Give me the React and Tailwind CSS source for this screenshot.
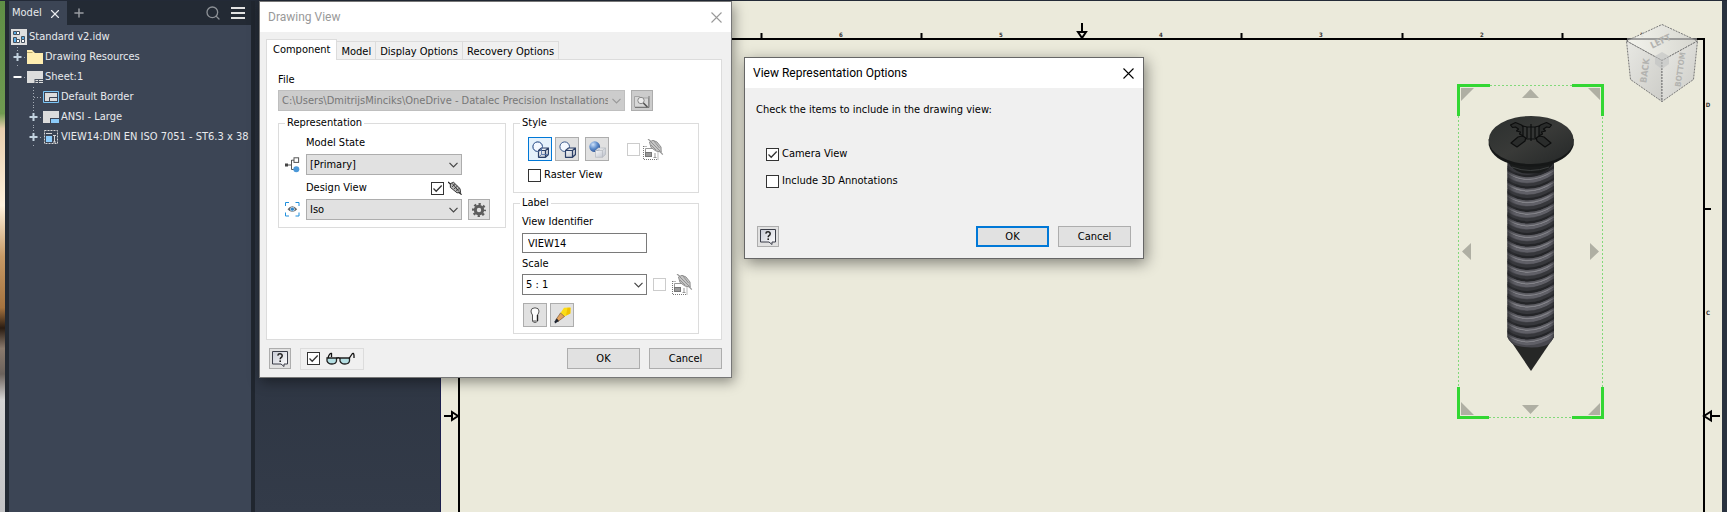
import { useState } from "react";
import { Plus, Search, X } from "lucide-react";

/* ---------- small controls ---------- */

const Check = ({ label, ariaLabel, defaultChecked = false, disabled = false }) => (
  <label className="flex items-center gap-[3px] leading-4">
    <span className="grid">
      <input
        type="checkbox"
        aria-label={ariaLabel}
        defaultChecked={defaultChecked}
        disabled={disabled}
        className="peer [grid-area:1/1] size-[13px] appearance-none border border-[#333] bg-white disabled:border-[#ccc]"
      />
      <svg
        viewBox="0 0 13 13"
        className="pointer-events-none [grid-area:1/1] size-[13px] opacity-0 peer-checked:opacity-100"
      >
        <path d="M2.5 6.5 5.2 9.2 10.7 3.5" fill="none" stroke="#333" strokeWidth="1.3" />
      </svg>
    </span>
    {label}
  </label>
);

const Chevron = ({ className }) => (
  <svg viewBox="0 0 9 6" className={className}>
    <path d="M.5 .8 4.5 4.8 8.5 .8" fill="none" stroke="currentColor" strokeWidth="1.2" />
  </svg>
);

const Select = ({ id, value, className, disabled = false, ariaLabel }) => (
  <span className="grid min-w-0 items-center">
    <select
      id={id}
      disabled={disabled}
      aria-label={ariaLabel}
      className={`[grid-area:1/1] h-[21px] w-full appearance-none border pt-px pr-4 pl-[3px] ${className}`}
    >
      <option>{value}</option>
    </select>
    <Chevron
      className={
        disabled
          ? "pointer-events-none [grid-area:1/1] mr-1 h-1.5 w-[9px] justify-self-end text-[#999]"
          : "pointer-events-none [grid-area:1/1] mr-1 h-1.5 w-[9px] justify-self-end text-[#444]"
      }
    />
  </span>
);

const ToolButton = ({ label, active = false, children }) => (
  <button
    type="button"
    aria-label={label}
    className={
      active
        ? "grid size-6 place-items-center border border-[#0078d7] bg-[#e5f1fb]"
        : "grid size-6 place-items-center border border-[#adadad] bg-[#e1e1e1]"
    }
  >
    {children}
  </button>
);

const SmallButton = ({ label, className = "bg-[#e1e1e1]", children }) => (
  <button
    type="button"
    aria-label={label}
    className={`grid h-[21px] w-[22px] place-items-center border border-[#adadad] ${className}`}
  >
    {children}
  </button>
);

const DialogButton = ({ primary = false, children }) => (
  <button
    type="button"
    className={
      primary
        ? "h-[21px] w-[73px] border-2 border-[#0078d7] bg-[#e1e1e1] leading-4"
        : "h-[21px] w-[73px] border border-[#adadad] bg-[#e1e1e1] leading-4"
    }
  >
    {children}
  </button>
);

/* ---------- icons ---------- */

const HelpIcon = () => (
  <svg viewBox="0 0 16 16" className="size-4">
    <defs>
      <linearGradient id="help" x1="0" y1="0" x2="1" y2="1">
        <stop offset="0" stopColor="#c9ccd6" />
        <stop offset="1" stopColor="#fff" />
      </linearGradient>
    </defs>
    <path d="M.5 .5h15v12.5h-3.5v2.5L9 13H.5z" fill="url(#help)" stroke="#3a3d48" />
    <path d="M5.8 4.6Q6 2.8 8 2.8T10.2 4.7Q10.2 5.9 9 6.6 8.2 7.2 8.2 8.2" fill="none" stroke="#222" strokeWidth="1.5" />
    <rect x="7.4" y="9.4" width="1.6" height="1.6" fill="#222" />
  </svg>
);

const StyleIcon = ({ kind }) => (
  <svg viewBox="0 0 17 17" className="size-[17px]">
    <defs>
      <radialGradient id="ball" cx=".35" cy=".3" r=".8">
        <stop offset="0" stopColor="#cfe2fa" />
        <stop offset=".5" stopColor="#5d8ccb" />
        <stop offset="1" stopColor="#24488a" />
      </radialGradient>
      <linearGradient id="box" x1="0" y1="0" x2="1" y2="1">
        <stop offset="0" stopColor="#fff" />
        <stop offset="1" stopColor="#b9bec9" />
      </linearGradient>
    </defs>
    <circle
      cx="5.7"
      cy="5.7"
      r={kind === "shaded" ? 5.4 : 4.8}
      fill={kind === "shaded" ? "url(#ball)" : "#f4f8ff"}
      stroke={kind === "shaded" ? "none" : "#3c5a8c"}
    />
    <path
      d="M6.5 9.5 9.5 7h7v6.5l-3 2.8h-7zM6.5 9.5h7l3-2.5M13.5 9.5v6.8"
      fill="url(#box)"
      stroke={kind === "shaded" ? "#b3b7be" : "#2c4068"}
      strokeWidth={kind === "shaded" ? 0.7 : 1.2}
      strokeLinejoin="round"
    />
    {kind === "hidden" && (
      <>
        <path d="M9.5 7v6.5h7M9.5 13.5l-3 2.8" fill="none" stroke="#5875a8" strokeWidth=".9" />
        <circle cx="5.7" cy="5.7" r="4.8" fill="none" stroke="#5875a8" strokeWidth=".7" />
      </>
    )}
  </svg>
);

const LinkIcon = () => (
  <svg viewBox="0 0 14 14" className="size-3.5">
    <path d="M0 1 3 3.5M10.5 11 13.6 13.6" stroke="#222" strokeWidth="1.2" />
    <path d="M2.3 2.6 5.6 1.3 12 7.6 12.6 11.6 9 11.8 2.4 6.4z" fill="#bbb" stroke="#222" strokeWidth=".9" />
    <path d="M4 5.8 7 3.4M6 7.8 9.4 5.2M8 9.6 11.4 7.4M4.4 2.6 11 10.6" stroke="#333" strokeWidth=".9" />
  </svg>
);

const InheritIcon = () => (
  <svg viewBox="0 0 21 21" className="size-[21px]">
    <path d="M.5 7v13.5H15V12M.5 7.5h4" fill="none" stroke="#777" strokeDasharray="1 1" />
    <path d="M2.5 13V9.5h7M12 14v4M10.5 18.5h3" fill="none" stroke="#999" />
    <rect x="2.5" y="13.5" width="6" height="4" fill="#999" stroke="#777" />
    <path d="M5 0 8 2.5M17 12.5 19.8 15.6" stroke="#999" strokeWidth="1.2" />
    <path d="M6.5 3 10 1.3 14 3 18 8 18.2 13 13 12 8 8.5z" fill="#c5c5c5" stroke="#909090" />
    <path d="M8 3 17 12M11 2 16.5 9M8 6 13 11" stroke="#8b8b8b" strokeWidth=".9" />
  </svg>
);

const StateIcon = () => (
  <svg viewBox="0 0 15 16" className="h-4 w-[15px]">
    <path d="M2 8h5M6.5 3v9.5M6.5 3.2H9M6.5 12.5H9" fill="none" stroke="#555" />
    <rect x="0" y="6.5" width="3" height="3" fill="#444" />
    <rect x="9" y=".8" width="4.6" height="4.6" fill="#fff" stroke="#555" />
    <circle cx="11.3" cy="12.3" r="3" fill="#4b98d8" />
  </svg>
);

const ViewIcon = () => (
  <svg viewBox="0 0 15 15" className="size-[15px]">
    <path d="M.5 4V.5H4M10.5 .5H14V4M14 10.5V14h-3.500M4 14H.5v-3.500" fill="none" stroke="#1f8fdc" />
    <path d="M2.500 7.300Q7.300 1.400 12.200 7.300 7.300 12.800 2.500 7.300z" fill="#666" />
    <circle cx="7.400" cy="7.200" r="2.300" fill="#d8ecfa" />
    <circle cx="7.400" cy="7.200" r="1.600" fill="#2e86cc" />
  </svg>
);

const GearIcon = () => (
  <svg viewBox="0 0 14 14" className="size-3.5">
    <circle cx="7" cy="7" r="3.700" fill="none" stroke="#5d5d5d" strokeWidth="3" />
    <circle
      cx="7"
      cy="7"
      r="5.900"
      fill="none"
      stroke="#5d5d5d"
      strokeWidth="2.200"
      strokeDasharray="2.300 2.334"
      strokeDashoffset="1.150"
    />
  </svg>
);

const BrowseIcon = () => (
  <svg viewBox="0 0 16 14" className="h-3.5 w-4">
    <path d="M.5 2.500h5l1 1.500h8V13H.5z" fill="#d8d8d8" stroke="#a5a5a5" />
    <path d="M15 2v11.500H1" fill="none" stroke="#777" />
    <circle cx="7" cy="6.500" r="3.200" fill="#ececec" stroke="#888" />
    <path d="m9.400 9 4 4" stroke="#555" strokeWidth="1.600" />
  </svg>
);

const BulbIcon = () => (
  <svg viewBox="0 0 10 16" className="h-4 w-2.5">
    <path d="M1 4Q1 .8 5 .8T9 4Q9 6 7.500 8v6L6.300 15.300H3.700L2.500 14V8Q1 6 1 4z" fill="#fdfdfd" stroke="#555" />
    <path d="M2.500 14h4" stroke="#555" />
    <path d="M7.500 8v6" stroke="#222" strokeWidth="1.400" />
  </svg>
);

const PencilIcon = () => (
  <svg viewBox="0 0 17 17" className="size-[17px]">
    <path d="M10 .8 16.500 .5 16.300 6.500 10.500 9.500 6.500 6z" fill="#fbdc17" />
    <path d="M13.500 .8h3L16.300 6.500 12 8.500z" fill="#f2c200" />
    <path d="M6.500 6 10.500 9.500 4 14.500 2 12.500z" fill="#e2a25e" stroke="#6d4c28" strokeWidth=".6" />
    <path d="M2.800 11.500 5 14 1 16.500 .4 14.500z" fill="#1e2430" />
  </svg>
);

const GlassesIcon = () => (
  <svg viewBox="0 0 29 13" className="h-[13px] w-[29px]">
    <path
      d="M1 6h9.500v3Q10 12 6 12T1 9zM14 6h9.500v3Q23 12 19 12T14 9z"
      fill="#b5dfe3"
      stroke="#222"
      strokeWidth="1.300"
    />
    <path
      d="M10.500 6.500Q12 5 14 6.500M2 6Q3.500 1 5.500 1.500V5M23 6.500 26.500 1.500Q28.300 .5 28 6"
      fill="none"
      stroke="#111"
      strokeWidth="1.300"
    />
  </svg>
);

const treeIcons = {
  root: (
    <svg viewBox="0 0 16 16" className="size-4">
      <path d="M0 0h16v16H0z" fill="#dedede" />
      <g fill="#5aaee8" stroke="#44505e">
        <path d="M2.500 2.500h3v3h-3zM2.500 8.500h3v5h-3zM10.500 7.500h3v3h-3z" />
        <path d="M5.500 2.500h3v3h-3zM5.500 10.500h3v3h-3zM10.500 10.500h3v3h-3z" fill="#fff" />
      </g>
    </svg>
  ),
  folder: (
    <svg viewBox="0 0 16 16" className="size-4">
      <path d="M0 1h5l3 3h8v11H0z" fill="#ffedb0" />
      <path d="M0 3.500h5.500" stroke="#bda96c" />
    </svg>
  ),
  sheet: (
    <svg viewBox="0 0 16 16" className="size-4">
      <path d="M0 2h16v12H0z" fill="#dcdcdc" />
      <path d="M8 10.500h8M8 12.500h8M11.500 10v4M8 10v4" stroke="#4b5360" />
    </svg>
  ),
  border: (
    <svg viewBox="0 0 16 16" className="size-4">
      <path d="M.5 2.500h15v11H.5z" fill="#3c4555" stroke="#7cc6f7" />
      <path d="M2 4h12v8H2z" fill="#dcdcdc" />
      <path d="M6.500 12V8.500H14" fill="none" stroke="#3c4555" />
    </svg>
  ),
  title: (
    <svg viewBox="0 0 16 16" className="size-4">
      <path d="M0 2h16v12H0z" fill="#dcdcdc" />
      <path d="M7 9h9v5H7z" fill="#3c4555" />
      <path d="M8 10h8v4H8z" fill="#8ccbfa" />
    </svg>
  ),
  view: (
    <svg viewBox="0 0 16 16" className="size-4">
      <path d="M1.500 1.500h13v13h-13z" fill="none" stroke="#d6d6d6" strokeDasharray="2 1" />
      <path d="M3 7h6v6H3z" fill="#8ccbfa" />
      <path d="M3 4.500h6M11.500 7v6M10 6.500h3M10 13h3" stroke="#d6d6d6" />
    </svg>
  ),
};

/* ---------- model browser ---------- */

const treeItems = [
  { text: "Standard v2.idw", icon: "root", level: 0 },
  { text: "Drawing Resources", icon: "folder", level: 1, sign: "+" },
  { text: "Sheet:1", icon: "sheet", level: 1, sign: "-" },
  { text: "Default Border", icon: "border", level: 2 },
  { text: "ANSI - Large", icon: "title", level: 2, sign: "+" },
  { text: "VIEW14:DIN EN ISO 7051 - ST6.3 x 38", icon: "view", level: 2, sign: "+" },
];

const Twisty = ({ sign, level }) => (
  <svg viewBox="0 0 16 20" className="h-5 w-4 shrink-0">
    {(level === 2 || sign === "+") && (
      <path d="M6.500 0v20" stroke="#a4abb5" strokeDasharray="1 2" />
    )}
    <path d="M7 10.500h9" stroke="#a4abb5" strokeDasharray="1 2" />
    {sign && <path d="M1 4h11v12H1z" fill="#3c4555" />}
    {sign === "-" && <path d="M2.500 10h8" stroke="#fff" strokeWidth="2" />}
    {sign === "+" && <path d="M2.500 10h8M6.500 6v8" stroke="#c3d3e0" strokeWidth="2" />}
  </svg>
);

const ModelBrowser = () => (
  <aside className="flex w-[242px] shrink-0 flex-col bg-[#3c4555] text-[#e8eaed]">
    <div className="flex h-6 items-center bg-[#232a34]">
      <button type="button" className="flex h-6 items-center gap-1.5 bg-[#3c4555] pt-px pr-[5px] pl-[3px]">
        Model
        <X className="size-3.5" strokeWidth={2} />
      </button>
      <button type="button" aria-label="Add browser" className="ml-[5px] text-[#9a9da2]">
        <Plus className="size-3.5" strokeWidth={2.5} />
      </button>
      <button type="button" aria-label="Search" className="ml-auto text-[#8d9196]">
        <Search className="size-4" strokeWidth={2} />
      </button>
      <button type="button" aria-label="Menu" className="mr-1.5 ml-2.5 text-[#e2e2e2]">
        <svg viewBox="0 0 14 12" className="h-3 w-3.5">
          <path d="M0 1h14M0 6h14M0 11h14" stroke="currentColor" strokeWidth="2" />
        </svg>
      </button>
    </div>
    <ul className="pt-0.5 pl-0.5">
      {treeItems.map((item) => (
        <li key={item.text} className="flex h-5 items-center whitespace-nowrap">
          {item.level === 2 && <span className="w-4 shrink-0" />}
          {item.level > 0 && <Twisty sign={item.sign} level={item.level} />}
          <span className="mr-0.5 shrink-0">{treeIcons[item.icon]}</span>
          {item.text}
        </li>
      ))}
    </ul>
  </aside>
);

/* ---------- drawing sheet ---------- */

const ribs = Array.from({ length: 15 }, (_, i) => 171 + i * 11.6);

const Screw = () => (
  <g>
    <defs>
      <linearGradient id="shaft" x1="0" x2="1">
        <stop offset="0" stopColor="#1d1e21" stopOpacity=".7" />
        <stop offset=".2" stopColor="#4b4b52" stopOpacity="0" />
        <stop offset=".85" stopColor="#4b4b52" stopOpacity="0" />
        <stop offset="1" stopColor="#1d1e21" stopOpacity=".6" />
      </linearGradient>
      <linearGradient id="head" x1="0" y1="0" x2="1" y2="1">
        <stop offset="0" stopColor="#2b2f2e" />
        <stop offset=".5" stopColor="#393a38" />
        <stop offset="1" stopColor="#242727" />
      </linearGradient>
      <clipPath id="shaftClip">
        <path d="M1507.500 160h46.500v177q-4 8-10 9-12 3-26 0-8-2-10.500-9z" />
      </clipPath>
    </defs>
    <path d="M1508 337h46l-23 34z" fill="#262726" />
    <g clipPath="url(#shaftClip)">
      <path d="M1507 160h48v190h-48z" fill="#48484e" />
      {ribs.map((y) => (
        <g key={y} fill="none">
          <path d={`M1505 ${y - 5}Q1528 ${y + 11} 1556 ${y - 8}`} stroke="#37383c" strokeWidth="3" />
          <path d={`M1505 ${y - 3}Q1528 ${y + 14} 1556 ${y - 5}`} stroke="#242528" strokeWidth="2.500" />
          <path d={`M1505 ${y - 1}Q1528 ${y + 16} 1556 ${y - 3}`} stroke="#5c5c62" strokeWidth="1.500" />
          <path d={`M1505 ${y + 0.5}Q1528 ${y + 17.5} 1556 ${y - 1.5}`} stroke="#828288" strokeWidth="1.500" />
          <path d={`M1505 ${y + 2.5}Q1528 ${y + 19.5} 1556 ${y + 0.5}`} stroke="#606067" strokeWidth="2.500" />
        </g>
      ))}
      <path d="M1507 160h48v190h-48z" fill="url(#shaft)" />
    </g>
    <path d="M1508 162q4 8 14 11 9 1 18 0 10-3 14-11z" fill="#191b1b" />
    <path d="M1512 167q18 7 37 0" fill="none" stroke="#3c3f3f" />
    <path d="M1488.700 139v6q4 15 26 20 16 3 33 0 22-6 26-20v-6z" fill="#151717" />
    <ellipse cx="1531.200" cy="140" rx="42.500" ry="24" fill="url(#head)" />
    {/* cross recess: four arms round a ribbed middle */}
    <g fill="#2a2c2b" stroke="#0d0e0e" strokeWidth="1.200" strokeLinejoin="round">
      <path d="M1522 136l-4 1-7 6 6 4 8-6 1-4zM1540 136l4 1 7 6-6 4-8-6-1-4z" />
      <path d="M1510.500 125l5-2.500 6 2.500 3 3-1 8-4-2 1-2-4-1 2-2-3-2-3 .500zM1551.500 125l-5-2.500-6 2.500-3 3 1 8 4-2-1-2 4-1-2-2 3-2 3 .500z" />
      <path d="M1523 126l4 1h8l4-1v10l-4 3h-8l-4-3z" fill="#333534" />
      <path d="M1527 127v11M1531 124v17M1535 127v11" fill="none" />
    </g>
  </g>
);

const ViewCube = () => (
  <g>
    <defs>
      <linearGradient id="cubeTop" x1="0" x2="1">
        <stop offset="0" stopColor="#f4f4ee" />
        <stop offset="1" stopColor="#d5d5cf" />
      </linearGradient>
      <linearGradient id="cubeSide" x1="0" x2="1" y2="1">
        <stop offset="0" stopColor="#e8e8e4" />
        <stop offset="1" stopColor="#cbcbc7" />
      </linearGradient>
    </defs>
    <g stroke="#777" strokeDasharray="2 1" strokeLinejoin="round" fillOpacity=".94">
      <path d="M1662 24.500 1697.500 41 1662 60.500 1626.500 41z" fill="url(#cubeTop)" />
      <path d="M1626.500 41 1662 60.500V101.500L1630.500 79.500z" fill="url(#cubeSide)" />
      <path d="M1697.500 41 1662 60.500V101.500L1693.500 79.500z" fill="url(#cubeSide)" />
    </g>
    <path d="M1627 39h70" stroke="#888" strokeWidth="1.500" />
    <path d="M1655 56l7-4 7 4v8l-7 5-7-5z" fill="#bfc2c2" fillOpacity=".6" />
    <g fontSize="9" fontWeight="700" fill="#b3b3b0" textAnchor="middle">
      <text transform="translate(1662 44) rotate(-26)">LEFT</text>
      <text transform="translate(1648 71) rotate(-82)">BACK</text>
      <text fontSize="8" transform="translate(1683 70) rotate(-82)">BOTTOM</text>
    </g>
  </g>
);

const zoneLabels = [
  { x: 841, text: "6" },
  { x: 1001, text: "5" },
  { x: 1161, text: "4" },
  { x: 1321, text: "3" },
  { x: 1482, text: "2" },
  { x: 1642, text: "1" },
];

const Sheet = () => (
  <main className="min-w-0 flex-1 overflow-hidden border-l border-[#1c1f4c] bg-[#ebeadb]">
    <svg width="1281" height="511" className="block">
      {/* sheet space starts at 441,1 in window space */}
      <g transform="translate(-441 -1)">
        <path d="M459 520V39H1704V520" fill="none" stroke="#000" strokeWidth="2" />
        <path
          d="M761.500 33v6M921.500 33v6M1241.500 33v6M1402.500 33v6M1562.500 33v6M1704 209h7"
          stroke="#000"
          strokeWidth="2"
        />
        <g fill="none" stroke="#000" strokeWidth="2">
          <path d="M1082 23v9M1078 32h8l-4 6z" />
          <path d="M444 416h8M452 412v8l6-4z" />
          <path d="M1720 416h-9M1711 411.500v9l-7-4.500z" />
        </g>
        <g fontSize="6" fontWeight="700" fill="#333" textAnchor="middle">
          {zoneLabels.map((zone) => (
            <text key={zone.text} x={zone.x} y="37">
              {zone.text}
            </text>
          ))}
          <text x="1708" y="107">D</text>
          <text x="1708" y="315">C</text>
        </g>

        <path d="M1458.500 85.500h144v332h-144z" fill="none" stroke="#18c818" strokeDasharray="1 3" />
        <g fill="none" stroke="#33d733" strokeWidth="3">
          <path d="M1458.500 116V85.500H1490M1572 85.500h30.500V116M1602.500 387v30.500H1572M1489 417.500h-30.500V387" />
        </g>
        <path
          d="M1461 88h13l-13 13zM1600 88h-12l12 12zM1461 415v-13l13 13zM1600 415v-12l-12 12zM1530.500 89l8.500 9h-17zM1530.500 414l8.500-9h-17zM1462 251.500l9-8.500v17zM1599 251.500l-9-8.500v17z"
          fill="#afafa3"
        />
        <Screw />
        <ViewCube />
      </g>
    </svg>
  </main>
);

/* ---------- dialogs ---------- */

const TitleBar = ({ title, muted = false }) => (
  <header
    className={
      muted
        ? "flex h-[30px] items-center justify-between bg-white pr-[9px] pl-2 text-[#999]"
        : "flex h-[30px] items-center justify-between bg-white pr-[9px] pl-2 text-black"
    }
  >
    <h2 className="font-[Roboto,sans-serif] text-xs">{title}</h2>
    <button type="button" aria-label="Close">
      <svg viewBox="0 0 11 11" className="size-[11px]">
        <path d="M.5 .5l10 10M10.500 .5l-10 10" stroke="currentColor" strokeWidth="1.100" />
      </svg>
    </button>
  </header>
);

const Group = ({ title, className, children }) => (
  <fieldset className={`border border-[#dcdcdc] ${className}`}>
    <legend className="ml-1.5 px-0.5 leading-4">{title}</legend>
    {children}
  </fieldset>
);

const tabs = ["Component", "Model", "Display Options", "Recovery Options"];

const DrawingViewDialog = () => {
  const [tab, setTab] = useState("Component");

  return (
    <section className="absolute top-px left-[259px] w-[473px] border border-[#777] bg-[#f0f0f0] shadow-[2px_4px_12px_rgba(0,0,0,0.4)]">
      <TitleBar title="Drawing View" muted />

      <div className="pt-[7px] pr-[9px] pb-2 pl-1.5">
        <div className="flex items-end" role="tablist">
          {tabs.map((name) => (
            <button
              key={name}
              type="button"
              role="tab"
              aria-selected={name === tab}
              onClick={() => setTab(name)}
              className={
                name === tab
                  ? "z-10 -mb-px h-[21px] border border-b-0 border-[#dcdcdc] bg-white px-1.5"
                  : "h-[18px] border border-b-0 border-l-0 border-[#dcdcdc] px-1 pt-0.5"
              }
            >
              {name}
            </button>
          ))}
        </div>

        <div className="h-[281px] border border-[#dcdcdc] bg-white pt-[11px] pl-[11px]">
          <label htmlFor="file" className="block pt-px leading-4">
            File
          </label>
          <div className="mt-0.5 grid grid-cols-[347px_22px] gap-1.5">
            <Select
              id="file"
              disabled
              value="C:\Users\DmitrijsMinciks\OneDrive - Datalec Precision Installations\D"
              className="border-[#bfbfbf] bg-[#ccc] text-[#777] opacity-100"
            />
            <SmallButton label="Browse" className="bg-[#ccc]">
              <BrowseIcon />
            </SmallButton>
          </div>

          <div className="mt-1 flex items-start gap-[7px]">
            <Group title="Representation" className="h-[113px] w-[228px]">
              <div className="grid grid-cols-[15px_156px_22px] items-center gap-x-1.5 gap-y-[3px] pt-1 pl-1.5">
                <label htmlFor="state" className="col-start-2 leading-4">
                  Model State
                </label>
                <div className="col-start-1">
                  <StateIcon />
                </div>
                <Select id="state" value="[Primary]" className="border-[#adadad] bg-[#e1e1e1]" />
                <div className="col-start-2 mt-0.5 flex items-center justify-between leading-4">
                  <label htmlFor="design">Design View</label>
                  <span className="flex items-center gap-1">
                    <Check ariaLabel="Associative" defaultChecked />
                    <LinkIcon />
                  </span>
                </div>
                <div className="col-start-1">
                  <ViewIcon />
                </div>
                <Select id="design" value="Iso" className="border-[#adadad] bg-[#e1e1e1]" />
                <SmallButton label="View representation options">
                  <GearIcon />
                </SmallButton>
              </div>
            </Group>

            <div className="flex w-[186px] flex-col gap-0.5">
              <Group title="Style" className="h-[78px]">
                <div className="flex items-center gap-[3px] pt-1.5 pl-3.5">
                  <ToolButton label="Hidden line" active>
                    <StyleIcon kind="hidden" />
                  </ToolButton>
                  <ToolButton label="Hidden line removed">
                    <StyleIcon kind="removed" />
                  </ToolButton>
                  <span className="mr-[15px] ml-[3px]">
                    <ToolButton label="Shaded">
                      <StyleIcon kind="shaded" />
                    </ToolButton>
                  </span>
                  <Check ariaLabel="Style from base" disabled />
                  <InheritIcon />
                </div>
                <div className="flex pt-1.5 pl-3.5">
                  <Check label="Raster View" />
                </div>
              </Group>

              <Group title="Label" className="h-[139px]">
                <div className="flex flex-col items-start pt-[3px] pl-2">
                  <label htmlFor="ident" className="leading-4">
                    View Identifier
                  </label>
                  <input
                    id="ident"
                    type="text"
                    defaultValue="VIEW14"
                    className="mt-[3px] h-5 w-[125px] border border-[#7a7a7a] bg-white px-[5px]"
                  />
                  <label htmlFor="scale" className="mt-0.5 pt-px leading-4">
                    Scale
                  </label>
                  <div className="mt-0.5 grid grid-cols-[125px_13px_21px] items-center gap-x-1.5">
                    <Select id="scale" value="5 : 1" className="border-[#7a7a7a] bg-white" />
                    <Check ariaLabel="Scale from base" disabled />
                    <InheritIcon />
                  </div>
                  <div className="mt-2 ml-px flex gap-[3px]">
                    <ToolButton label="Toggle visibility">
                      <BulbIcon />
                    </ToolButton>
                    <ToolButton label="Edit label">
                      <PencilIcon />
                    </ToolButton>
                  </div>
                </div>
              </Group>
            </div>
          </div>
        </div>

        <footer className="flex items-center gap-[9px] pt-2 pl-[3px]">
          <SmallButton label="Help">
            <HelpIcon />
          </SmallButton>
          <div className="-my-1 mr-auto flex h-[22px] items-center gap-1.5 border border-[#dcdcdc] px-1.5 pr-2">
            <Check ariaLabel="Preview" defaultChecked />
            <GlassesIcon />
          </div>
          <DialogButton>OK</DialogButton>
          <DialogButton>Cancel</DialogButton>
        </footer>
      </div>
    </section>
  );
};

const RepresentationDialog = () => (
  <section className="absolute top-[57px] left-[744px] w-[400px] border border-[#666] bg-[#f0f0f0] shadow-[2px_4px_14px_rgba(0,0,0,0.45)]">
    <TitleBar title="View Representation Options" />
    <div className="px-3 pt-3.5 pb-[11px]">
      <p className="-ml-px leading-4">Check the items to include in the drawing view:</p>
      <div className="mt-7 flex flex-col items-start gap-[11px] pl-[9px]">
        <Check label="Camera View" defaultChecked />
        <Check label="Include 3D Annotations" />
      </div>
      <footer className="mt-[37px] flex gap-[9px]">
        <span className="mr-auto">
          <SmallButton label="Help">
            <HelpIcon />
          </SmallButton>
        </span>
        <DialogButton primary>OK</DialogButton>
        <DialogButton>Cancel</DialogButton>
      </footer>
    </div>
  </section>
);

export default function App() {
  return (
    <div className="relative flex h-screen overflow-hidden bg-[#232a37] pt-px font-['DejaVu_Sans_Condensed','DejaVu_Sans',sans-serif] text-[11px] text-black">
      {/* sliver of the desktop behind the window */}
      <div className="w-[5px] shrink-0 bg-[linear-gradient(#5f8f45_0%,#6f9a50_22%,#e9cfae_25%,#fff2dd_40%,#c79a66_50%,#a5733f_60%,#2a1c12_64%,#8a7a6d_68%,#6b625c_73%,#d4d4d4_78%,#c4c4c6_100%)]" />
      <div className="w-1 shrink-0 bg-[#232a34]" />
      <ModelBrowser />
      <div className="w-[189px] shrink-0 border-l-4 border-[#20262f] bg-linear-to-b from-[#232a35] to-[#333b49]" />
      <Sheet />
      <div className="w-[5px] shrink-0 bg-[#29323f]" />

      <DrawingViewDialog />
      <RepresentationDialog />
    </div>
  );
}
